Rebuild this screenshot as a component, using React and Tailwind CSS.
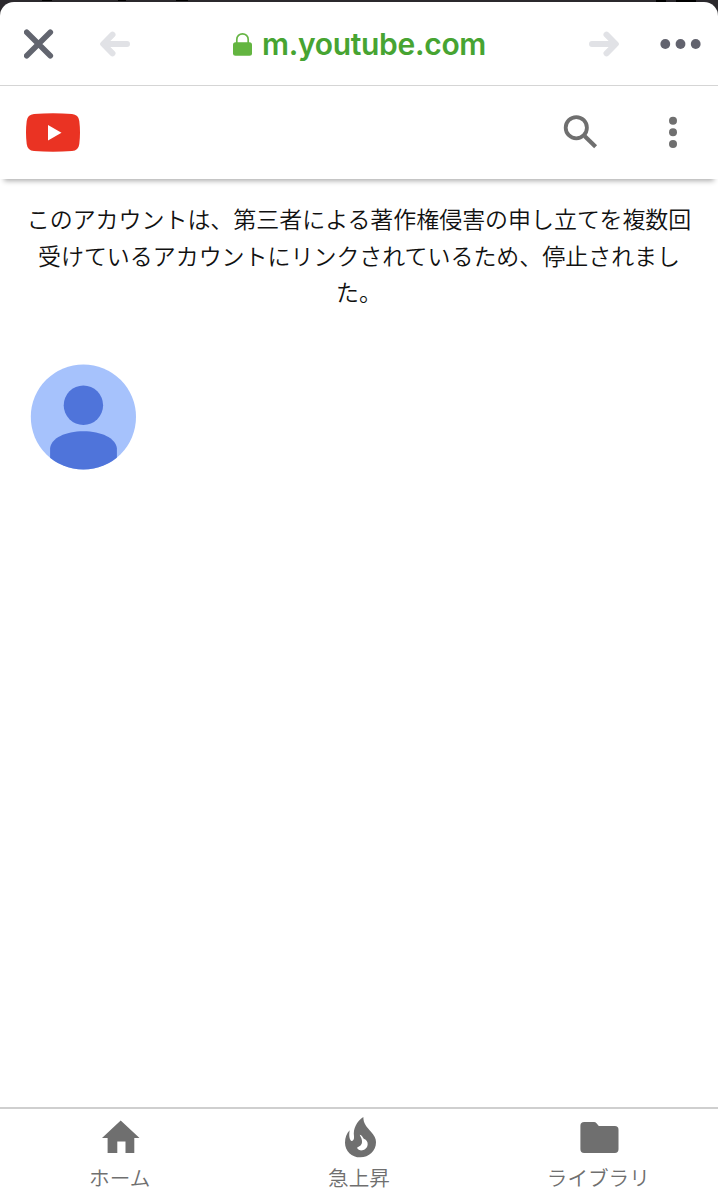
const tabs = [
  { label: 'ホーム', icon: HomeIcon },
  { label: '急上昇', icon: TrendingIcon },
  { label: 'ライブラリ', icon: LibraryIcon },
];

function HomeIcon() {
  return (
    <svg className="w-10 h-10" viewBox="0 0 40 40" fill="currentColor">
      <path d="M19.700 3.500 38.500 21h-5.200v15H24.500V24.500h-8.200V36H6.600V21H1z" />
    </svg>
  );
}

function TrendingIcon() {
  return (
    <svg className="w-10 h-10" viewBox="120 66 120 120" overflow="visible" fill="currentColor" fillRule="evenodd">
      <path d="M190 66C190 86 200 96 213 110C223 121 228 130 228 142C228 168 207 187 181 187C155 187 135 168 135 143C135 128 140 115 149 106C147 118 147 131 153 137C159 140 163 134 162 124C159 100 170 80 190 66ZM179 119C183 127 187 134 186 142C185 152 177 155 171 158C174 164 180 167 187 166C197 164 203 156 203 147C203 140 199 135 193 132C188 129 188 121 179 119Z" />
    </svg>
  );
}

function LibraryIcon() {
  return (
    <svg className="w-10 h-10" viewBox="0 0 40 40" fill="currentColor">
      <path d="M5.300 5h9.700q1.500 0 2.500 1.200L19.800 9H35.800q3.700 0 3.700 3.700v19.600q0 3.700-3.700 3.700H5.100Q1.400 36 1.400 32.300V8.700Q1.400 5 5.300 5z" />
    </svg>
  );
}

function BrowserBar() {
  return (
    <div className="bg-[#2b292d]">
      {/* sliver of the page behind the sheet */}
      <div className="h-0.5 flex items-start text-black">
        <span className="ml-[42px] w-2.5 h-px bg-current" />
        <span className="ml-[66px] w-2 h-px bg-current" />
        <span className="ml-[50px] w-3 h-px bg-current" />
        <span className="ml-auto mr-2.5 w-2.5 h-0.5 bg-current" />
        <span className="mr-[22px] w-5 h-0.5 bg-current" />
      </div>
      <div className="h-21 bg-white rounded-t-[14px] border-b border-[#d5d5d5] flex items-center justify-between pl-6 pr-4">
        <div className="flex items-center gap-[46px] text-[#62656f]">
          <svg className="w-[30px] h-[30px]" viewBox="0 0 30 30" fill="none" stroke="currentColor" strokeWidth="5.600" strokeLinecap="round">
            <path d="M2.700 3.300 26.300 26.700M26.300 3.300 2.700 26.700" />
          </svg>
          <svg className="w-[30px] h-[30px] text-[#e1e2e6]" viewBox="0 0 30 30" fill="none" stroke="currentColor" strokeWidth="6" strokeLinecap="round" strokeLinejoin="round">
            <path d="M27 15H3.500M12.500 5.700 3.200 15l9.300 9.300" />
          </svg>
        </div>

        <div className="flex items-center gap-[9px]">
          <svg className="w-5 h-6" viewBox="0 0 20 24">
            <path d="M3.800 11V7.500a5.700 5.700 0 0 1 11.400 0V11" fill="none" stroke="#67b545" strokeWidth="1.7" />
            <rect x="0" y="10.300" width="19" height="13.500" rx="2.500" fill="#63b540" />
          </svg>
          <span className="pt-px font-['Inter',sans-serif] font-semibold text-[30px] tracking-[-0.300px] leading-9 text-[#47a432]">m.youtube.com</span>
        </div>

        <div className="flex items-center gap-[41px] text-[#62636e]">
          <svg className="w-[30px] h-[30px] text-[#e1e2e6]" viewBox="0 0 30 30" fill="none" stroke="currentColor" strokeWidth="6" strokeLinecap="round" strokeLinejoin="round">
            <path d="M3 15h23.500M17.500 5.700l9.300 9.300-9.300 9.300" />
          </svg>
          <svg className="w-[42px] h-[30px]" viewBox="0 0 42 30" fill="currentColor">
            <circle cx="5.300" cy="15" r="4.900" />
            <circle cx="20.500" cy="15" r="4.900" />
            <circle cx="35.700" cy="15" r="4.900" />
          </svg>
        </div>
      </div>
    </div>
  );
}

function SiteHeader() {
  return (
    <header className="h-[93px] shrink-0 bg-white shadow-[0_6px_5px_-4px_rgba(0,0,0,0.32)] flex items-center justify-between pl-[26px] pr-[41px]">
      <svg className="w-[54px] h-[39px]" viewBox="0 0 54 39">
        <path d="M8 1Q27-.5 46 1 52.500 1.500 53.300 8 54.700 19.500 53.300 31 52.500 37.500 46 38 27 39.500 8 38 1.500 37.500.7 31-.7 19.500.7 8 1.500 1.500 8 1z" fill="#ea3323" />
        <path d="M22 12v15.500l13.500-7.800z" fill="#fff" />
      </svg>
      <div className="flex items-center gap-[71px] pb-px text-[#6f6f6f]">
        <svg className="w-9 h-9" viewBox="0 0 36 36" fill="none" stroke="currentColor">
          <circle cx="14.300" cy="13.700" r="10.600" strokeWidth="3.800" />
          <path d="M22.800 22.200 33.600 32.800" strokeWidth="4.200" />
        </svg>
        <svg className="w-2 h-9" viewBox="0 0 8 36" fill="currentColor">
          <circle cx="4" cy="6.700" r="4" />
          <circle cx="4" cy="18.300" r="4" />
          <circle cx="4" cy="29.900" r="4" />
        </svg>
      </div>
    </header>
  );
}

function Avatar() {
  return (
    <svg className="w-[106px] h-[106px]" viewBox="0 0 106 106">
      <clipPath id="avatar-clip">
        <circle cx="53.400" cy="53" r="52.600" />
      </clipPath>
      <g clipPath="url(#avatar-clip)">
        <rect width="106" height="106" fill="#a6c2fc" />
        <circle cx="53.400" cy="41.300" r="19.700" fill="#4f74da" />
        <path d="M20.100 106V84C21.400 74 35.400 67.200 53.400 67.200S85.400 74 86.900 84v22z" fill="#4f74da" />
      </g>
    </svg>
  );
}

const App = () => {
  return (
    <div className="h-[1200px] w-full overflow-hidden bg-white flex flex-col font-['Liberation_Sans','Noto_Sans_CJK_JP',sans-serif]" lang="ja">
      <BrowserBar />
      <SiteHeader />

      <main className="flex-1 px-[22px] pt-[23px]">
        <p className="text-center font-[350] text-[22.960px] leading-[36.500px] text-[#111]">
          このアカウントは、第三者による著作権侵害の申し立てを複数回受けているアカウントにリンクされているため、停止されました。
        </p>
        <div className="pt-[52px] pl-2">
          <Avatar />
        </div>
      </main>

      <nav className="h-[93px] grid grid-cols-3 border-t-2 border-[#cfcfcf] text-[#6f6f6f]">
        {tabs.map(({ label, icon: Icon }) => (
          <div key={label} className="flex flex-col items-center pt-2">
            <div className="pl-0.5">
              <Icon />
            </div>
            <span className="mt-2 font-[350] text-[20.600px] leading-7">{label}</span>
          </div>
        ))}
      </nav>
    </div>
  );
};

export default App;
